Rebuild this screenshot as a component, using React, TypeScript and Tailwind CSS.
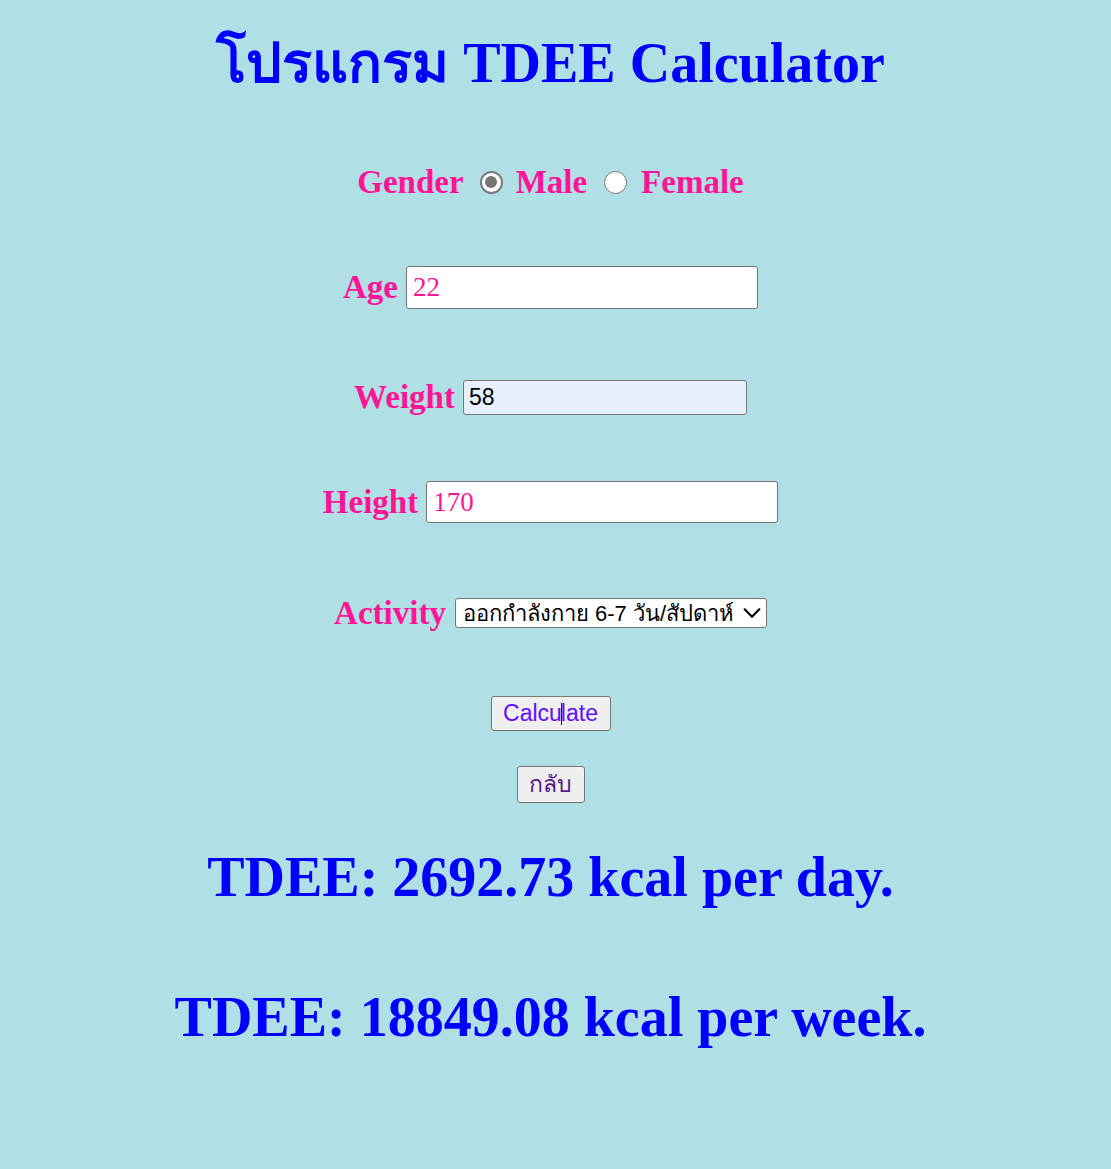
export default function App() {
  const serif = "font-['Liberation_Serif','Times_New_Roman',serif]"
  const label = `${serif} text-[33px] font-bold leading-[40px] text-[#ff1493]`

  return (
    <div className="min-h-[1169px] w-full bg-[#b0e0e6] pr-[10px] flex flex-col items-center">
      <h1 className={`${serif} mt-[31px] h-[64px] text-[56px] font-bold leading-[64px] text-[#0000ff]`}>
        โปรแกรม TDEE Calculator
      </h1>

      {/* gender */}
      <div className="mt-[67px] flex h-[40px] items-center">
        <span className={label}>Gender</span>
        <span className="ml-[16px] flex h-[23px] w-[23px] items-center justify-center rounded-full border-[2.5px] border-[#7a7a7a] bg-white">
          <span className="h-[12px] w-[12px] rounded-full bg-[#767676]" />
        </span>
        <span className={`${label} ml-[13px]`}>Male</span>
        <span className="ml-[17px] h-[23px] w-[23px] rounded-full border-[1.5px] border-[#767676] bg-white" />
        <span className={`${label} ml-[14px]`}>Female</span>
      </div>

      {/* age */}
      <div className="mt-[63px] flex h-[44px] items-center gap-2">
        <span className={label}>Age</span>
        <div className={`${serif} flex h-[43px] w-[352px] items-center rounded-[3px] border border-[#767676] bg-white px-[6px] text-[27px] text-[#ff1493]`}>
          22
        </div>
      </div>

      {/* weight */}
      <div className="mt-[68px] flex h-[40px] items-center gap-2">
        <span className={label}>Weight</span>
        <div className="flex h-[35px] w-[284px] items-center rounded-[3px] border border-[#767676] bg-[#e8f0fe] px-[5px] font-['Liberation_Sans',Arial,sans-serif] text-[23px] text-black">
          58
        </div>
      </div>

      {/* height */}
      <div className="mt-[64px] flex h-[42px] items-center gap-2">
        <span className={label}>Height</span>
        <div className={`${serif} flex h-[42px] w-[352px] items-center rounded-[3px] border border-[#767676] bg-white px-[6px] text-[27px] text-[#ff1493]`}>
          170
        </div>
      </div>

      {/* activity */}
      <div className="mt-[70px] flex h-[40px] items-center gap-[9px]">
        <span className={label}>Activity</span>
        <div className="flex h-[30px] w-[312px] items-center rounded-[3px] border border-[#767676] bg-white pl-[7px] pr-[3px] font-['Liberation_Sans',Arial,sans-serif] text-[22px] text-black">
          <span className="min-w-0 flex-1 whitespace-nowrap">ออกกำลังกาย 6-7 วัน/สัปดาห์</span>
          <svg width="22" height="22" viewBox="0 0 24 24" fill="none" stroke="black" strokeWidth="2.4" strokeLinecap="round" strokeLinejoin="round" className="ml-[3px] shrink-0">
            <path d="M4 8l8 8 8-8" />
          </svg>
        </div>
      </div>

      <button className="mt-[63px] flex h-[35px] w-[120px] items-center justify-center rounded-[3px] border border-[#767676] bg-[#efefef] font-['Liberation_Sans',Arial,sans-serif] text-[23px] text-[#6010ff]">
        Calcu<span className="mx-[-1px] inline-block h-[22px] w-px bg-[#2a0a80]" />late
      </button>

      <button className="mt-[35px] flex h-[37px] w-[68px] items-center justify-center rounded-[3px] border border-[#767676] bg-[#efefef] font-['Liberation_Sans',Arial,sans-serif] text-[23px] text-[#551a8b]">
        กลับ
      </button>

      <h2 className={`${serif} mt-[42px] h-[64px] text-[56px] font-bold leading-[64px] text-[#0000ff]`}>
        TDEE: 2692.73 kcal per day.
      </h2>
      <h2 className={`${serif} mt-[76px] h-[64px] text-[56px] font-bold leading-[64px] text-[#0000ff]`}>
        TDEE: 18849.08 kcal per week.
      </h2>
    </div>
  )
}
